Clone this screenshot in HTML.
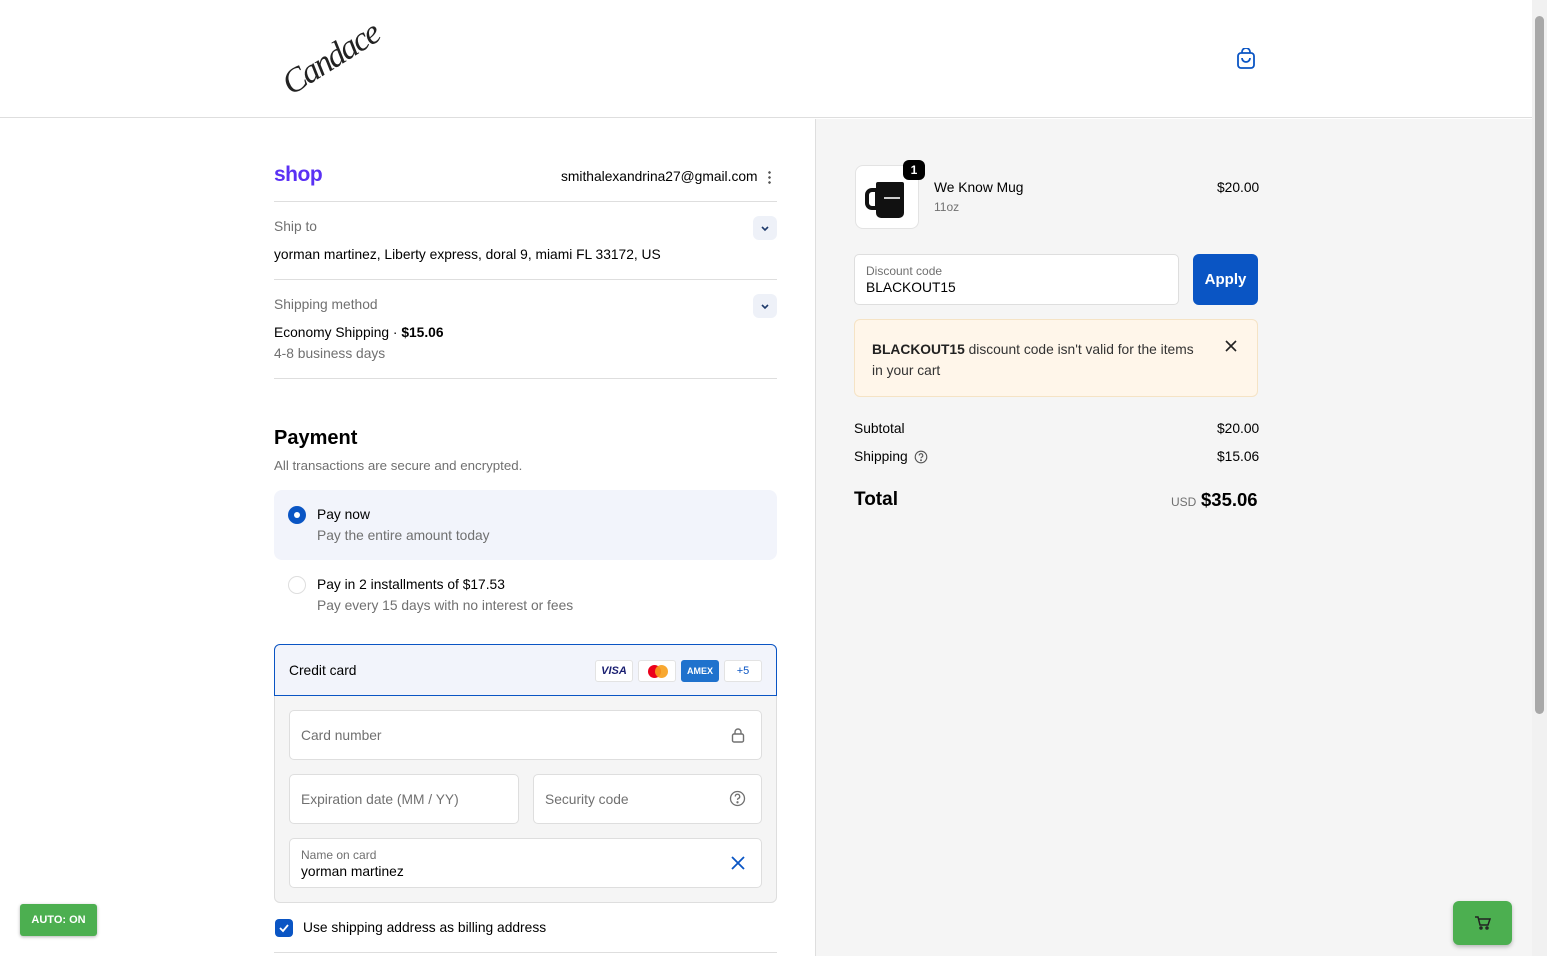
<!DOCTYPE html>
<html><head><meta charset="utf-8"><style>
*{box-sizing:border-box;margin:0;padding:0}
body{width:1547px;height:956px;overflow:hidden;font-family:"Liberation Sans",Arial,sans-serif;color:#000;background:#fff;position:relative;font-size:13.8px}
.a{position:absolute}
.g{color:#707070}
.hr{position:absolute;height:1px;background:#dedede}
.chev{position:absolute;width:24px;height:24px;border-radius:6px;background:#eef1f8}
.inp{position:absolute;border:1px solid #dedede;border-radius:5px;background:#fff}
.ph{position:absolute;color:#707070;font-size:13.8px}
.card{position:absolute;top:660px;height:22px;border:1px solid #e3e3e3;border-radius:3px;background:#fff;font-size:11px;text-align:center;line-height:20px}
</style></head><body>
<div class="a" style="left:0;top:0;width:1532px;height:118px;border-bottom:1px solid #dedede;background:#fff"></div>
<div class="a" style="left:276px;top:40px;width:110px;text-align:center;font-family:'Liberation Serif',serif;font-style:italic;font-size:34px;transform:rotate(-32deg);letter-spacing:-2px;color:#222">Candace</div>
<svg class="a" style="left:1235px;top:48px" width="22" height="22" viewBox="0 0 22 22" fill="none" stroke="#0a55c4" stroke-width="1.8"><rect x="3" y="5" width="16" height="15" rx="3"/><path d="M7 5V4a4 4 0 0 1 8 0v1M7 10a4 4 0 0 0 8 0"/></svg>
<div class="a" style="left:815px;top:119px;width:717px;height:837px;background:#f5f5f5;border-left:1px solid #dedede"></div>
<div class="a" style="left:1532px;top:0;width:15px;height:956px;background:#f1f1f1"></div>
<div class="a" style="left:1535px;top:16px;width:9px;height:698px;background:#a8a8a8;border-radius:5px"></div>
<div class="a" style="left:274px;top:163px;font-size:21px;font-weight:bold;color:#5a31f4;letter-spacing:-0.5px">shop</div>
<div class="a" style="left:561px;top:169px">smithalexandrina27@gmail.com</div>
<div class="a" style="left:768px;top:170px;width:3px;height:14px;background:radial-gradient(circle,#555 1.2px,transparent 1.4px) 0 0/3px 5px"></div>
<div class="hr" style="left:274px;top:201px;width:503px"></div>
<div class="a g" style="left:274px;top:219px">Ship to</div>
<div class="chev" style="left:753px;top:216px"></div><svg class="a" style="left:759px;top:222px" width="12" height="12"><path d="M3 5l3 3 3-3" fill="none" stroke="#1e3a6b" stroke-width="1.6"/></svg>
<div class="a" style="left:274px;top:247px">yorman martinez, Liberty express, doral 9, miami FL 33172, US</div>
<div class="hr" style="left:274px;top:279px;width:503px"></div>
<div class="a g" style="left:274px;top:297px">Shipping method</div>
<div class="chev" style="left:753px;top:294px"></div><svg class="a" style="left:759px;top:300px" width="12" height="12"><path d="M3 5l3 3 3-3" fill="none" stroke="#1e3a6b" stroke-width="1.6"/></svg>
<div class="a" style="left:274px;top:325px">Economy Shipping · <b>$15.06</b></div>
<div class="a g" style="left:274px;top:346px">4-8 business days</div>
<div class="hr" style="left:274px;top:378px;width:503px"></div>
<div class="a" style="left:274px;top:427px;font-size:20px;font-weight:bold">Payment</div>
<div class="a g" style="left:274px;top:458px;font-size:13.3px">All transactions are secure and encrypted.</div>
<div class="a" style="left:274px;top:490px;width:503px;height:70px;background:#f2f4fb;border-radius:8px"></div>
<div class="a" style="left:288px;top:506px;width:18px;height:18px;border-radius:50%;background:#0a55c4"></div><div class="a" style="left:294px;top:512px;width:6px;height:6px;border-radius:50%;background:#fff"></div>
<div class="a" style="left:317px;top:507px">Pay now</div>
<div class="a g" style="left:317px;top:528px">Pay the entire amount today</div>
<div class="a" style="left:288px;top:576px;width:18px;height:18px;border-radius:50%;border:1px solid #dedede;background:#fff"></div>
<div class="a" style="left:317px;top:577px">Pay in 2 installments of $17.53</div>
<div class="a g" style="left:317px;top:598px">Pay every 15 days with no interest or fees</div>
<div class="a" style="left:274px;top:644px;width:503px;height:259px;background:#f5f5f5;border:1px solid #dedede;border-radius:6px"></div>
<div class="a" style="left:274px;top:644px;width:503px;height:52px;background:#f2f4fb;border:1px solid #0a55c4;border-radius:6px 6px 0 0"></div>
<div class="a" style="left:289px;top:663px">Credit card</div>
<div class="card" style="left:595px;width:38px;font-weight:bold;font-style:italic;color:#1a1f71">VISA</div>
<div class="card" style="left:638px;width:38px"><span style="position:absolute;left:9px;top:4px;width:13px;height:13px;border-radius:50%;background:#eb001b"></span><span style="position:absolute;left:16px;top:4px;width:13px;height:13px;border-radius:50%;background:#f79e1b;opacity:.9"></span></div>
<div class="card" style="left:681px;width:38px;background:#1f72cd;color:#fff;font-size:9px;font-weight:bold;border-color:#1f72cd">AMEX</div>
<div class="card" style="left:724px;width:38px;color:#0a55c4">+5</div>
<div class="inp" style="left:289px;top:710px;width:473px;height:50px"></div>
<div class="ph" style="left:301px;top:728px">Card number</div>
<svg class="a" style="left:730px;top:727px" width="16" height="16" fill="none" stroke="#707070" stroke-width="1.4"><rect x="2.5" y="7" width="11" height="8" rx="1.5"/><path d="M5 7V5a3 3 0 0 1 6 0v2"/></svg>
<div class="inp" style="left:289px;top:774px;width:230px;height:50px"></div>
<div class="ph" style="left:301px;top:792px">Expiration date (MM / YY)</div>
<div class="inp" style="left:533px;top:774px;width:229px;height:50px"></div>
<div class="ph" style="left:545px;top:792px">Security code</div>
<svg class="a" style="left:729px;top:790px" width="17" height="17" fill="none" stroke="#707070" stroke-width="1.3"><circle cx="8.5" cy="8.5" r="7"/><path d="M6.3 6.5a2.2 2.2 0 1 1 3 2c-.6.3-.8.7-.8 1.4"/><circle cx="8.5" cy="12.3" r=".5" fill="#707070"/></svg>
<div class="inp" style="left:289px;top:838px;width:473px;height:50px"></div>
<div class="a g" style="left:301px;top:848px;font-size:12px">Name on card</div>
<div class="a" style="left:301px;top:864px">yorman martinez</div>
<svg class="a" style="left:730px;top:855px" width="16" height="16"><path d="M2 2l12 12M14 2L2 14" stroke="#0a55c4" stroke-width="1.8"/></svg>
<div class="a" style="left:275px;top:919px;width:18px;height:18px;border-radius:4px;background:#0a55c4"></div>
<svg class="a" style="left:277px;top:921px" width="14" height="14"><path d="M3 7l3 3 5-6" fill="none" stroke="#fff" stroke-width="1.8"/></svg>
<div class="a" style="left:303px;top:920px">Use shipping address as billing address</div>
<div class="hr" style="left:274px;top:952px;width:503px"></div>
<div class="a" style="left:20px;top:904px;width:77px;height:32px;background:#4caf50;border-radius:3px;color:#fff;font-size:11px;font-weight:bold;text-align:center;line-height:32px;box-shadow:0 1px 3px rgba(0,0,0,.3)">AUTO: ON</div>
<div class="a" style="left:855px;top:165px;width:64px;height:64px;background:#fff;border:1px solid #e3e3e3;border-radius:8px"></div>
<div class="a" style="left:876px;top:182px;width:28px;height:36px;background:#111;border-radius:2px 2px 5px 5px"></div>
<div class="a" style="left:865px;top:188px;width:14px;height:22px;border:4px solid #111;border-radius:7px 0 0 7px"></div>
<div class="a" style="left:884px;top:197px;width:16px;height:2px;background:#ccc"></div>
<div class="a" style="left:903px;top:160px;width:22px;height:20px;background:#000;border-radius:6px;color:#fff;font-size:12px;font-weight:bold;text-align:center;line-height:20px">1</div>
<div class="a" style="left:934px;top:180px">We Know Mug</div>
<div class="a g" style="left:934px;top:200px;font-size:12px">11oz</div>
<div class="a" style="left:1217px;top:180px">$20.00</div>
<div class="inp" style="left:854px;top:254px;width:325px;height:51px"></div>
<div class="a g" style="left:866px;top:264px;font-size:12px">Discount code</div>
<div class="a" style="left:866px;top:280px">BLACKOUT15</div>
<div class="a" style="left:1193px;top:254px;width:65px;height:51px;background:#0a55c4;border-radius:6px;color:#fff;font-weight:bold;font-size:15px;text-align:center;line-height:51px">Apply</div>
<div class="a" style="left:854px;top:319px;width:404px;height:78px;background:#fff6ea;border:1px solid #f5e3c5;border-radius:6px"></div>
<div class="a" style="left:872px;top:339px;width:330px;line-height:21px;color:#333"><b style="color:#222">BLACKOUT15</b> discount code isn't valid for the items in your cart</div>
<svg class="a" style="left:1224px;top:339px" width="14" height="14"><path d="M2 2l10 10M12 2L2 12" stroke="#222" stroke-width="1.6"/></svg>
<div class="a" style="left:854px;top:421px">Subtotal</div><div class="a" style="left:1217px;top:421px">$20.00</div>
<div class="a" style="left:854px;top:449px">Shipping</div>
<svg class="a" style="left:914px;top:450px" width="14" height="14" fill="none" stroke="#555" stroke-width="1.1"><circle cx="7" cy="7" r="5.8"/><path d="M5.2 5.5a1.8 1.8 0 1 1 2.4 1.7c-.5.2-.6.5-.6 1.1"/><circle cx="7" cy="10.2" r=".4" fill="#555"/></svg>
<div class="a" style="left:1217px;top:449px">$15.06</div>
<div class="a" style="left:854px;top:489px;font-size:19px;font-weight:bold">Total</div>
<div class="a g" style="left:1171px;top:495px;font-size:12px">USD</div>
<div class="a" style="left:1201px;top:489px;font-size:18.5px;font-weight:bold">$35.06</div>
<div class="a" style="left:1453px;top:901px;width:59px;height:44px;background:#4caf50;border-radius:6px;box-shadow:0 2px 4px rgba(0,0,0,.25)"></div>
<svg class="a" style="left:1474px;top:915px" width="17" height="15" fill="none" stroke="#222" stroke-width="1.5"><path d="M1 2h3l2 8h8l2-6H5"/><circle cx="7" cy="13" r="1"/><circle cx="13" cy="13" r="1"/></svg>
</body></html>
